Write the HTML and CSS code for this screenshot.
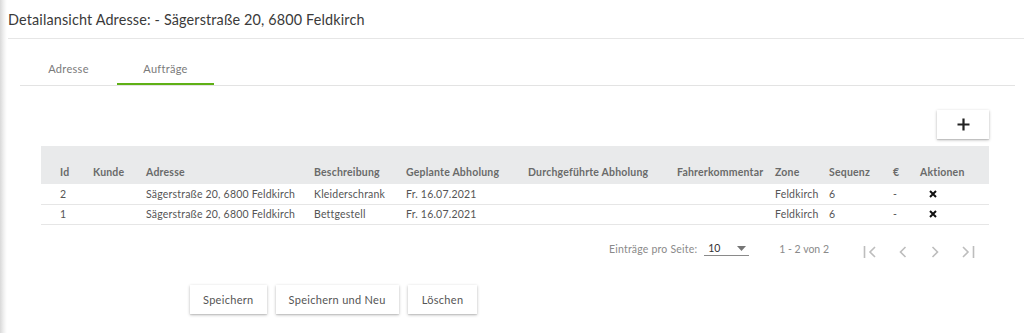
FILE: index.html
```html
<!DOCTYPE html>
<html lang="de">
<head>
<meta charset="utf-8">
<title>Detailansicht Adresse</title>
<link rel="stylesheet" href="styles.css">
</head>
<body>
<div class="page">
  <header class="title-bar">
    <h1 class="title">Detailansicht Adresse: - Sägerstraße 20, 6800 Feldkirch</h1>
  </header>
  <div class="content">
    <nav class="tabs">
      <div class="tab">Adresse</div>
      <div class="tab tab-active">Aufträge</div>
    </nav>
    <div class="panel">
      <div class="toolbar">
        <button class="add-btn" type="button" aria-label="Hinzufügen">
          <svg width="13" height="13" viewBox="0 0 13 13"><path d="M6.5 0.5v12M0.5 6.5h12" stroke="#222" stroke-width="2.2" fill="none"/></svg>
        </button>
      </div>
      <table class="grid">
        <thead>
          <tr>
            <th class="c-id">Id</th>
            <th class="c-kunde">Kunde</th>
            <th class="c-adr">Adresse</th>
            <th class="c-beschr">Beschreibung</th>
            <th class="c-gepl">Geplante Abholung</th>
            <th class="c-durch">Durchgeführte Abholung</th>
            <th class="c-fahrer">Fahrerkommentar</th>
            <th class="c-zone">Zone</th>
            <th class="c-seq">Sequenz</th>
            <th class="c-eur">€</th>
            <th class="c-akt">Aktionen</th>
          </tr>
        </thead>
        <tbody>
          <tr>
            <td>2</td><td></td><td>Sägerstraße 20, 6800 Feldkirch</td><td>Kleiderschrank</td><td>Fr. 16.07.2021</td><td></td><td></td><td>Feldkirch</td><td>6</td><td>-</td>
            <td class="act"><svg width="8" height="8" viewBox="0 0 8 8"><path d="M1 1l6 6M7 1l-6 6" stroke="#111" stroke-width="2" fill="none"/></svg></td>
          </tr>
          <tr>
            <td>1</td><td></td><td>Sägerstraße 20, 6800 Feldkirch</td><td>Bettgestell</td><td>Fr. 16.07.2021</td><td></td><td></td><td>Feldkirch</td><td>6</td><td>-</td>
            <td class="act"><svg width="8" height="8" viewBox="0 0 8 8"><path d="M1 1l6 6M7 1l-6 6" stroke="#111" stroke-width="2" fill="none"/></svg></td>
          </tr>
        </tbody>
      </table>
      <div class="paginator">
        <span class="pg-label">Einträge pro Seite:</span>
        <div class="pg-select">
          <span>10</span>
          <svg width="9" height="5" viewBox="0 0 9 5"><path d="M0 0h9L4.5 5z" fill="#757575"/></svg>
        </div>
        <span class="pg-range">1 - 2 von 2</span>
        <div class="pg-nav">
          <svg width="16" height="14" viewBox="0 0 16 14"><path d="M1.5 1v12" stroke="#bdbdbd" stroke-width="1.6" fill="none"/><path d="M12 2L7 7l5 5" stroke="#bdbdbd" stroke-width="1.6" fill="none"/></svg>
          <svg width="16" height="14" viewBox="0 0 16 14"><path d="M10.5 2L5.5 7l5 5" stroke="#bdbdbd" stroke-width="1.6" fill="none"/></svg>
          <svg width="16" height="14" viewBox="0 0 16 14"><path d="M5.5 2l5 5-5 5" stroke="#bdbdbd" stroke-width="1.6" fill="none"/></svg>
          <svg width="16" height="14" viewBox="0 0 16 14"><path d="M4 2l5 5-5 5" stroke="#bdbdbd" stroke-width="1.6" fill="none"/><path d="M14.5 1v12" stroke="#bdbdbd" stroke-width="1.6" fill="none"/></svg>
        </div>
      </div>
      <div class="actions">
        <button class="btn" type="button">Speichern</button>
        <button class="btn" type="button">Speichern und Neu</button>
        <button class="btn btn-narrow" type="button">Löschen</button>
      </div>
    </div>
  </div>
</div>
</body>
</html>
```

FILE: styles.css
```css
* { box-sizing: border-box; }
html, body { margin: 0; padding: 0; background: #fff; }
body {
  font-family: "Lato", "Open Sans", sans-serif;
  color: #333;
  width: 1024px;
  height: 333px;
  overflow: hidden;
}
.page {
  padding-left: 8px;
  background: linear-gradient(to right, #d9d9d9 0, #ececec 3px, #f7f7f7 5px, #fff 7px) no-repeat left top / 8px 100%;
  height: 333px;
}
.title-bar {
  height: 39px;
  border-bottom: 1px solid #e6e6e6;
  display: flex;
  align-items: center;
  padding-top: 1px;
}
.title {
  margin: 0;
  font-size: 14.4px;
  font-weight: 400;
  color: #3a3a3a;
  letter-spacing: 0.15px;
}
.content {
  padding: 17px 9px 0 12px;
}
.tabs {
  display: flex;
  border-bottom: 1px solid #e3e3e3;
  height: 30px;
}
.tab {
  width: 97px;
  text-align: center;
  font-size: 11px;
  color: #7a7a7a;
  padding-top: 6px;
  letter-spacing: 0.3px;
}
.tab-active {
  border-bottom: 2px solid #5fb016;
}
.panel {
  padding: 0 26px 0 21px;
}
.toolbar {
  display: flex;
  justify-content: flex-end;
  padding-top: 24px;
  height: 60px;
}
.add-btn {
  width: 52px;
  height: 29px;
  border: none;
  background: #fff;
  box-shadow: 0 1px 3px rgba(0,0,0,0.25), 0 1px 1px rgba(0,0,0,0.1);
  display: flex;
  align-items: center;
  justify-content: center;
  padding: 0;
}
.grid {
  width: 948px;
  border-collapse: collapse;
  table-layout: fixed;
  font-size: 10.5px;
}
.grid th {
  background: #e9eaeb;
  height: 38px;
  vertical-align: bottom;
  text-align: left;
  font-weight: 700;
  color: #6a6a6a;
  padding: 0 0 6px 0;
  letter-spacing: 0.2px;
}
.grid td {
  height: 20px;
  padding: 0;
  color: #555;
  border-bottom: 1px solid #e6e6e6;
  letter-spacing: 0.2px;
  white-space: nowrap;
}
.grid th:first-child, .grid td:first-child { padding-left: 19px; }
.c-id { width: 52px; }
.c-kunde { width: 53px; }
.c-adr { width: 168px; }
.c-beschr { width: 92px; }
.c-gepl { width: 122px; }
.c-durch { width: 149px; }
.c-fahrer { width: 98px; }
.c-zone { width: 54px; }
.c-seq { width: 64px; }
.c-eur { width: 27px; }
.c-akt { width: 69px; }
.grid td.act { padding-left: 9px; }
.grid td.act svg { display: block; }
.paginator {
  display: flex;
  align-items: center;
  justify-content: flex-end;
  height: 48px;
  padding-right: 14px;
  font-size: 10.5px;
  color: #8a8a8a;
  padding-top: 1px;
}
.pg-label { margin-right: 7px; letter-spacing: 0.2px; }
.pg-select {
  width: 45px;
  display: flex;
  justify-content: space-between;
  align-items: center;
  border-bottom: 1px solid #8a8a8a;
  padding: 0 3px 1px 4px;
  color: #333;
  margin-right: 30px;
}
.pg-range { margin-right: 34px; }
.pg-nav { display: flex; gap: 16px; padding-top: 6px; }
.pg-nav svg { display: block; }
.actions {
  display: flex;
  gap: 9px;
  padding-left: 149px;
  padding-top: 12px;
}
.btn {
  height: 29px;
  border: none;
  background: #fff;
  box-shadow: 0 1px 3px rgba(0,0,0,0.25), 0 1px 1px rgba(0,0,0,0.08);
  font-family: inherit;
  font-size: 11px;
  color: #555;
  padding: 0 13px;
  letter-spacing: 0.3px;
}
.btn-narrow { padding: 0 14px; }
```
